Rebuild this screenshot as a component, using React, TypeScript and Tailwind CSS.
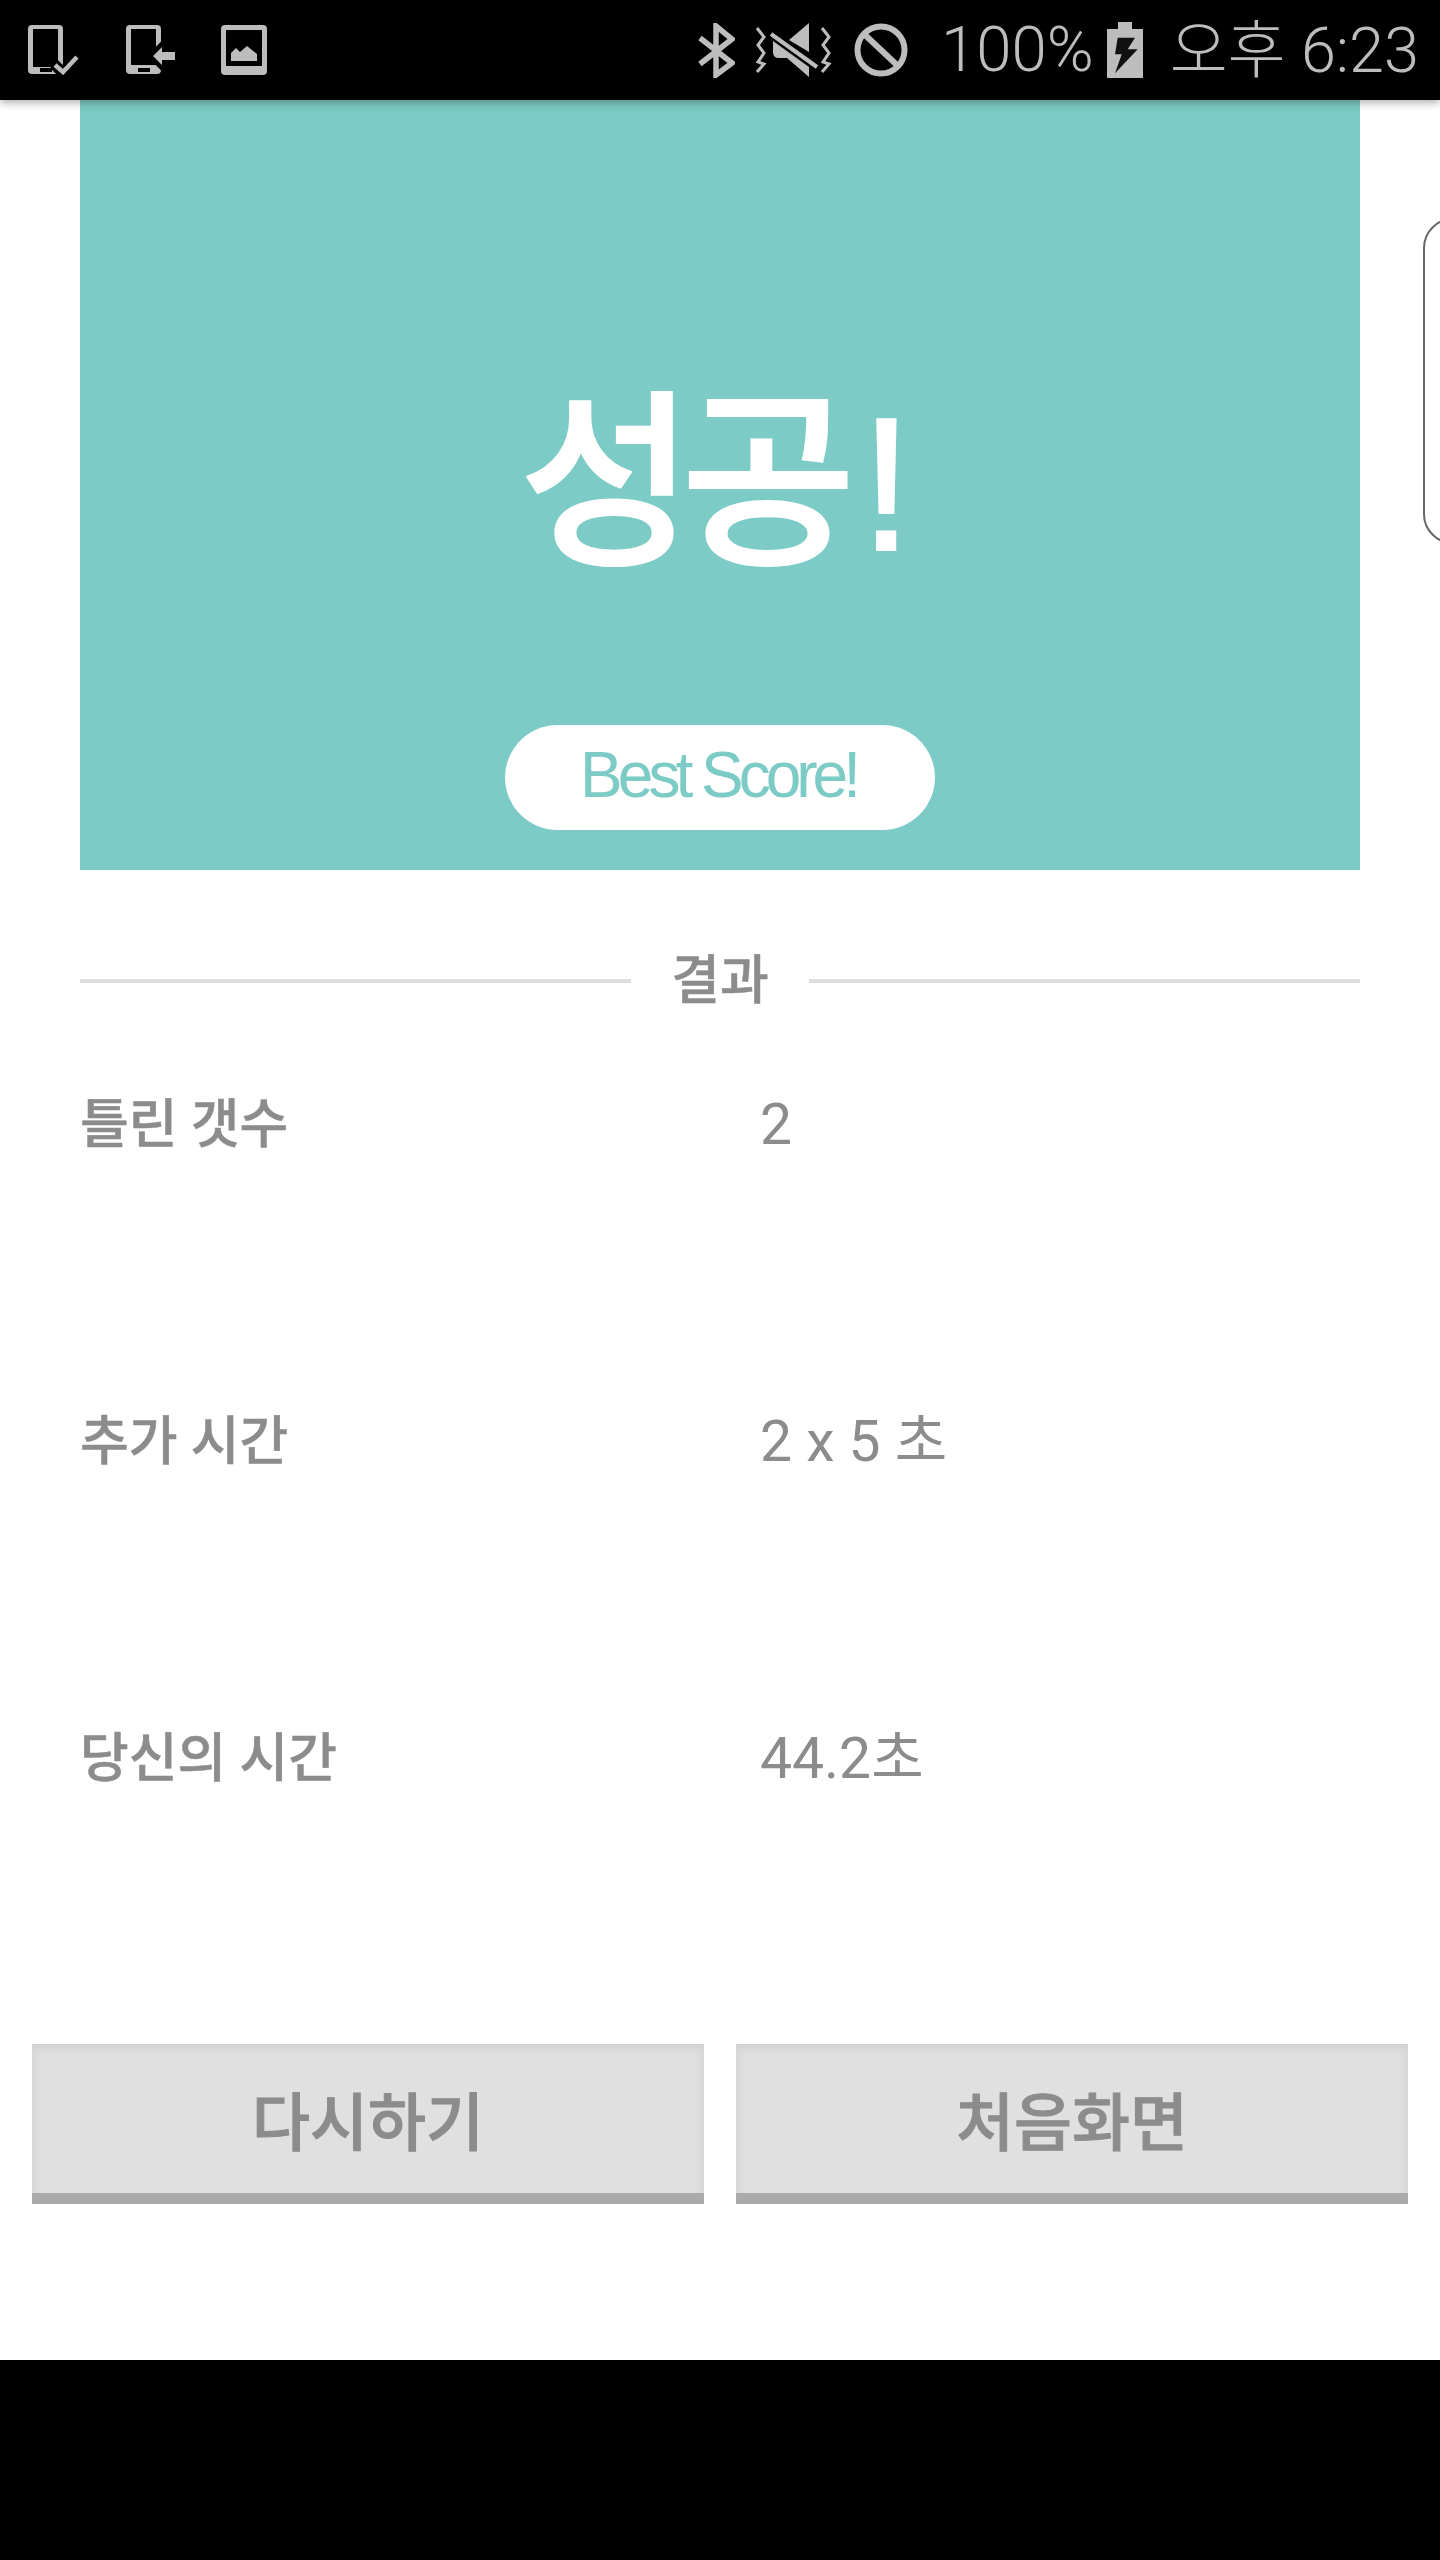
function IconPhoneCheck() {
  return (
    <svg width="52" height="50" viewBox="0 0 52 50" fill="none" className="shrink-0">
      <path fillRule="evenodd" d="M4 0h27a4 4 0 0 1 4 4v41a4 4 0 0 1-4 4H4a4 4 0 0 1-4-4V4a4 4 0 0 1 4-4ZM5 4v38h25V4Z" fill="#bdbdbd" />
      <rect x="12" y="43" width="12" height="4" fill="#000" />
      <path d="M26 39l9 9L50 32" stroke="#000" strokeWidth="11" />
      <path d="M27 40l8 7 14-15" stroke="#bdbdbd" strokeWidth="4.5" />
    </svg>
  );
}

function IconPhoneArrow() {
  return (
    <svg width="49" height="50" viewBox="0 0 49 50" fill="none" className="shrink-0">
      <path fillRule="evenodd" d="M4 0h27a4 4 0 0 1 4 4v41a4 4 0 0 1-4 4H4a4 4 0 0 1-4-4V4a4 4 0 0 1 4-4ZM5 4v36h25V4Z" fill="#bdbdbd" />
      <rect x="12" y="43" width="12" height="4" fill="#000" />
      <path d="M27 31l9-9v5h13v8H36v5Z" fill="#bdbdbd" stroke="#000" strokeWidth="9" paintOrder="stroke" />
    </svg>
  );
}

function IconPhoneImage() {
  return (
    <svg width="46" height="50" viewBox="0 0 46 50" className="shrink-0">
      <rect x="0" y="0" width="46" height="50" rx="4" fill="#bdbdbd" />
      <rect x="5" y="5" width="36" height="36" fill="#000" />
      <path d="M10 36v-8l5-5 4 4 7-6 10 8v7Z" fill="#bdbdbd" />
    </svg>
  );
}

function IconBluetooth() {
  return (
    <svg width="37" height="55" viewBox="0 0 37 55" fill="none" className="shrink-0">
      <path d="M2 15l32 25-16 12V3l16 13L2 41" stroke="#bdbdbd" strokeWidth="5.5" />
    </svg>
  );
}

function IconMute() {
  return (
    <svg width="78" height="54" viewBox="0 0 78 54" fill="none" className="shrink-0">
      <path d="M2 5l7 9-6 8 6 8-6 9 6 2-7 8" stroke="#bdbdbd" strokeWidth="3" />
      <path d="M67 5l7 9-6 8 6 8-6 9 6 2-7 8" stroke="#bdbdbd" strokeWidth="3" />
      <path d="M34 17L54 0v29Z" fill="#bdbdbd" />
      <path d="M18 18L54 44v10L32 35H24q-6 0-6-6Z" fill="#bdbdbd" />
      <path d="M16 11l46 33" stroke="#bdbdbd" strokeWidth="4" />
    </svg>
  );
}

function IconBlock() {
  return (
    <svg width="54" height="54" viewBox="0 0 54 54" fill="none" className="shrink-0">
      <circle cx="27" cy="27" r="23.5" stroke="#bdbdbd" strokeWidth="6" />
      <path d="M10 11l34 32" stroke="#bdbdbd" strokeWidth="6" />
    </svg>
  );
}

function IconBattery() {
  return (
    <svg width="36" height="56" viewBox="0 0 36 56" className="shrink-0">
      <path d="M11 0h14v7h11v49H0V7h11Z" fill="#bdbdbd" />
      <path d="M10.7 15.7H28L20.7 27.3H30.7L8 51.3 14.7 32.3H8Z" fill="#111" />
    </svg>
  );
}

function ResultRow({ label, value }: { label: string; value: string }) {
  return (
    <div className="grid h-[317px] grid-cols-[680px_1fr] leading-[70px] text-[#8c8c8c]">
      <div className="text-[53px] font-medium [-webkit-text-stroke:0.5px_#8c8c8c]">{label}</div>
      <div className="text-[57px]">{value}</div>
    </div>
  );
}

function GameButton({ label }: { label: string }) {
  return (
    <button className="flex h-[160px] w-[672px] items-center justify-center border-b-[11px] border-b-[#aaaaaa] bg-[#e0e0e0] pt-[12px] text-[63px] font-medium text-[#8c8c8c] shadow-[inset_0_10px_10px_-6px_#d0d0d0,inset_10px_0_10px_-8px_#d4d4d4,inset_-10px_0_10px_-8px_#d4d4d4] [-webkit-text-stroke:1px_#8c8c8c]">
      {label}
    </button>
  );
}

export default function App() {
  return (
    <div className="flex h-[2560px] flex-col overflow-hidden bg-black font-['Roboto','Noto_Sans_CJK_KR',sans-serif]">
      <header className="relative z-10 flex h-[100px] shrink-0 items-center justify-between bg-black pl-[28px] pr-[21px] text-[#bdbdbd] shadow-[0_3px_8px_rgba(0,0,0,0.3)]">
        <div className="flex items-center">
          <div className="mr-[46px]"><IconPhoneCheck /></div>
          <div className="mr-[46px]"><IconPhoneArrow /></div>
          <IconPhoneImage />
        </div>
        <div className="flex items-center">
          <div className="mr-[20px]"><IconBluetooth /></div>
          <div className="mr-[21px]"><IconMute /></div>
          <div className="mr-[33px]"><IconBlock /></div>
          <span className="mr-[13px] text-[63.5px] font-light leading-none">100%</span>
          <div className="mr-[27px]"><IconBattery /></div>
          <span className="text-[63px] font-light leading-none">오후 6:23</span>
        </div>
      </header>

      <main className="relative h-[2260px] shrink-0 overflow-hidden bg-white">
        <section className="mx-[80px] flex h-[770px] flex-col items-center bg-[#7ccbc6] text-white">
          <h1 className="mt-[284px] pr-[8px] text-[190px] font-medium leading-[200px] [-webkit-text-stroke:2px_#ffffff]">
            <span className="tracking-[-13px]">성공</span>
            <span className="ml-[17px] font-['Liberation_Sans',sans-serif] font-normal">!</span>
          </h1>
          <div className="mt-[140px] flex h-[105px] w-[430px] items-center justify-center rounded-full bg-white pb-[6px] pr-[4px] font-['Liberation_Sans',sans-serif] text-[64px] tracking-[-5px] text-[#7ccbc6]">
            Best Score!
          </div>
        </section>

        <div className="mx-[80px] mt-[76px] flex items-center gap-[40px] text-[53px] font-medium leading-[70px] text-[#8c8c8c] [-webkit-text-stroke:0.5px_#8c8c8c]">
          <div className="h-[4px] flex-1 bg-[#dddddd]" />
          <span>결과</span>
          <div className="h-[4px] flex-1 bg-[#dddddd]" />
        </div>

        <div className="mx-[80px] mt-[74px]">
          <ResultRow label="틀린 갯수" value="2" />
          <ResultRow label="추가 시간" value="2 x 5 초" />
          <ResultRow label="당신의 시간" value="44.2초" />
        </div>

        <div className="flex justify-between px-[32px] pt-[3px]">
          <GameButton label="다시하기" />
          <GameButton label="처음화면" />
        </div>

        <div className="absolute left-[1423px] top-[118px] h-[326px] w-[60px] rounded-[44px] border-2 border-[#666666] bg-white" />
      </main>
    </div>
  );
}
